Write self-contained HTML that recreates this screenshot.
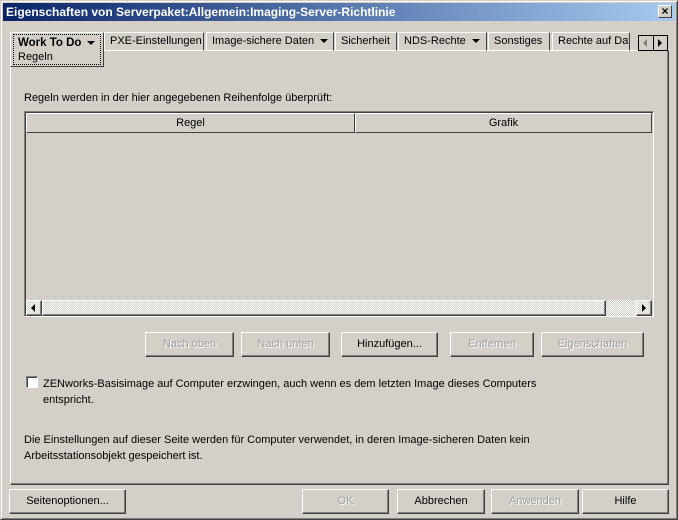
<!DOCTYPE html><html><head><meta charset="utf-8"><style>
*{box-sizing:border-box;margin:0;padding:0}
body{width:678px;height:520px;background:#d4d0c8;font:11px "Liberation Sans",sans-serif;color:#000;position:relative;overflow:hidden}
.a{position:absolute}
.win{left:0;top:0;width:678px;height:520px;border:1px solid;border-color:#d4d0c8 #404040 #404040 #d4d0c8;box-shadow:inset 1px 1px #fff,inset -1px -1px #808080}
.title{left:3px;top:3px;width:672px;height:18px;background:linear-gradient(90deg,#0a246a,#a6caf0);color:#fff;font-weight:bold;font-size:12px;line-height:18px;padding-left:3px}
.x{right:6px;top:5px;width:14px;height:13px;background:#d4d0c8;border:1px solid;border-color:#fff #404040 #404040 #fff;color:#000;font-size:12px;line-height:11px;text-align:center;font-weight:bold}
.tab{top:32px;height:19px;border:1px solid;border-color:#fff #404040 transparent #fff;line-height:16px;padding-left:5px;white-space:nowrap;overflow:hidden}
.tri{display:inline-block;width:0;height:0;border-left:4px solid transparent;border-right:4px solid transparent;border-top:4px solid #000;vertical-align:middle;margin-left:6px}
.btn{height:25px;border:1px solid;border-color:#fff #404040 #404040 #fff;box-shadow:inset -1px -1px #808080;text-align:center;line-height:22px}
.dis{color:#a0a0a0;text-shadow:1px 1px #fff}
</style></head><body>
<div class="a win"></div>
<div class="a title">Eigenschaften von Serverpaket:Allgemein:Imaging-Server-Richtlinie</div>
<div class="a x">×</div>
<!-- panel -->
<div class="a" style="left:10px;top:50px;width:659px;height:435px;border:1px solid;border-color:#fff #404040 #404040 #fff;box-shadow:inset -1px -1px #808080"></div>
<div class="a tab" style="left:104px;width:100px">PXE-Einstellungen</div>
<div class="a tab" style="left:206px;width:128px">Image-sichere Daten<span class="tri"></span></div>
<div class="a tab" style="left:335px;width:62px">Sicherheit</div>
<div class="a tab" style="left:398px;width:89px">NDS-Rechte<span class="tri"></span></div>
<div class="a tab" style="left:488px;width:62px">Sonstiges</div>
<div class="a tab" style="left:552px;width:78px">Rechte auf Dat</div>
<div class="a" style="left:638px;top:35px;width:30px;height:16px;border:1px solid #000;background:#d4d0c8"></div>
<div class="a" style="left:643px;top:39px;width:0;height:0;border-top:4px solid transparent;border-bottom:4px solid transparent;border-right:4px solid #808080"></div>
<div class="a" style="left:653px;top:35px;width:1px;height:16px;background:#000"></div>
<div class="a" style="left:658px;top:39px;width:0;height:0;border-top:4px solid transparent;border-bottom:4px solid transparent;border-left:4px solid #000"></div>
<div class="a" style="left:10px;top:32px;width:94px;height:35px;background:#d4d0c8;border:1px solid;border-color:#fff #404040 #404040 #fff"></div>
<div class="a" style="left:13px;top:34px;width:88px;height:31px;border:1px dotted #000;padding:1px 4px;line-height:14px"><b style="font-size:11.5px">Work To Do</b><span class="tri"></span><br>Regeln</div>
<div class="a" style="left:24px;top:92px">Regeln werden in der hier angegebenen Reihenfolge überprüft:</div>
<!-- table -->
<div class="a" style="left:24px;top:111px;width:630px;height:206px;border:1px solid;border-color:#808080 #fff #fff #808080;box-shadow:inset 1px 1px #404040"></div>
<div class="a btn" style="left:26px;top:113px;width:329px;height:20px;line-height:18px;box-shadow:none">Regel</div>
<div class="a btn" style="left:355px;top:113px;width:297px;height:20px;line-height:18px;box-shadow:none">Grafik</div>
<div class="a" style="left:26px;top:300px;width:626px;height:16px;background:repeating-conic-gradient(#d4d0c8 0 25%,#fff 0 50%) 0 0/2px 2px"></div>
<div class="a btn" style="left:26px;top:300px;width:16px;height:16px"></div>
<div class="a" style="left:31px;top:304px;border-top:4px solid transparent;border-bottom:4px solid transparent;border-right:4px solid #000"></div>
<div class="a btn" style="left:42px;top:300px;width:564px;height:16px"></div>
<div class="a btn" style="left:636px;top:300px;width:16px;height:16px"></div>
<div class="a" style="left:642px;top:304px;border-top:4px solid transparent;border-bottom:4px solid transparent;border-left:4px solid #000"></div>
<!-- buttons -->
<div class="a btn dis" style="left:145px;top:332px;width:89px">Nach oben</div>
<div class="a btn dis" style="left:241px;top:332px;width:89px">Nach unten</div>
<div class="a btn" style="left:341px;top:332px;width:97px">Hinzufügen...</div>
<div class="a btn dis" style="left:450px;top:332px;width:84px">Entfernen</div>
<div class="a btn dis" style="left:541px;top:332px;width:103px">Eigenschaften</div>
<div class="a" style="left:26px;top:376px;width:12px;height:12px;background:#fff;border:1px solid;border-color:#808080 #fff #fff #808080;box-shadow:inset 1px 1px #404040"></div>
<div class="a" style="left:43px;top:376px;line-height:16px">ZENworks-Basisimage auf Computer erzwingen, auch wenn es dem letzten Image dieses Computers<br>entspricht.</div>
<div class="a" style="left:24px;top:432px;line-height:16px">Die Einstellungen auf dieser Seite werden für Computer verwendet, in deren Image-sicheren Daten kein<br>Arbeitsstationsobjekt gespeichert ist.</div>
<div class="a btn" style="left:9px;top:489px;width:117px">Seitenoptionen...</div>
<div class="a btn dis" style="left:302px;top:489px;width:87px">OK</div>
<div class="a btn" style="left:397px;top:489px;width:88px">Abbrechen</div>
<div class="a btn dis" style="left:491px;top:489px;width:88px">Anwenden</div>
<div class="a btn" style="left:582px;top:489px;width:87px">Hilfe</div>
</body></html>
